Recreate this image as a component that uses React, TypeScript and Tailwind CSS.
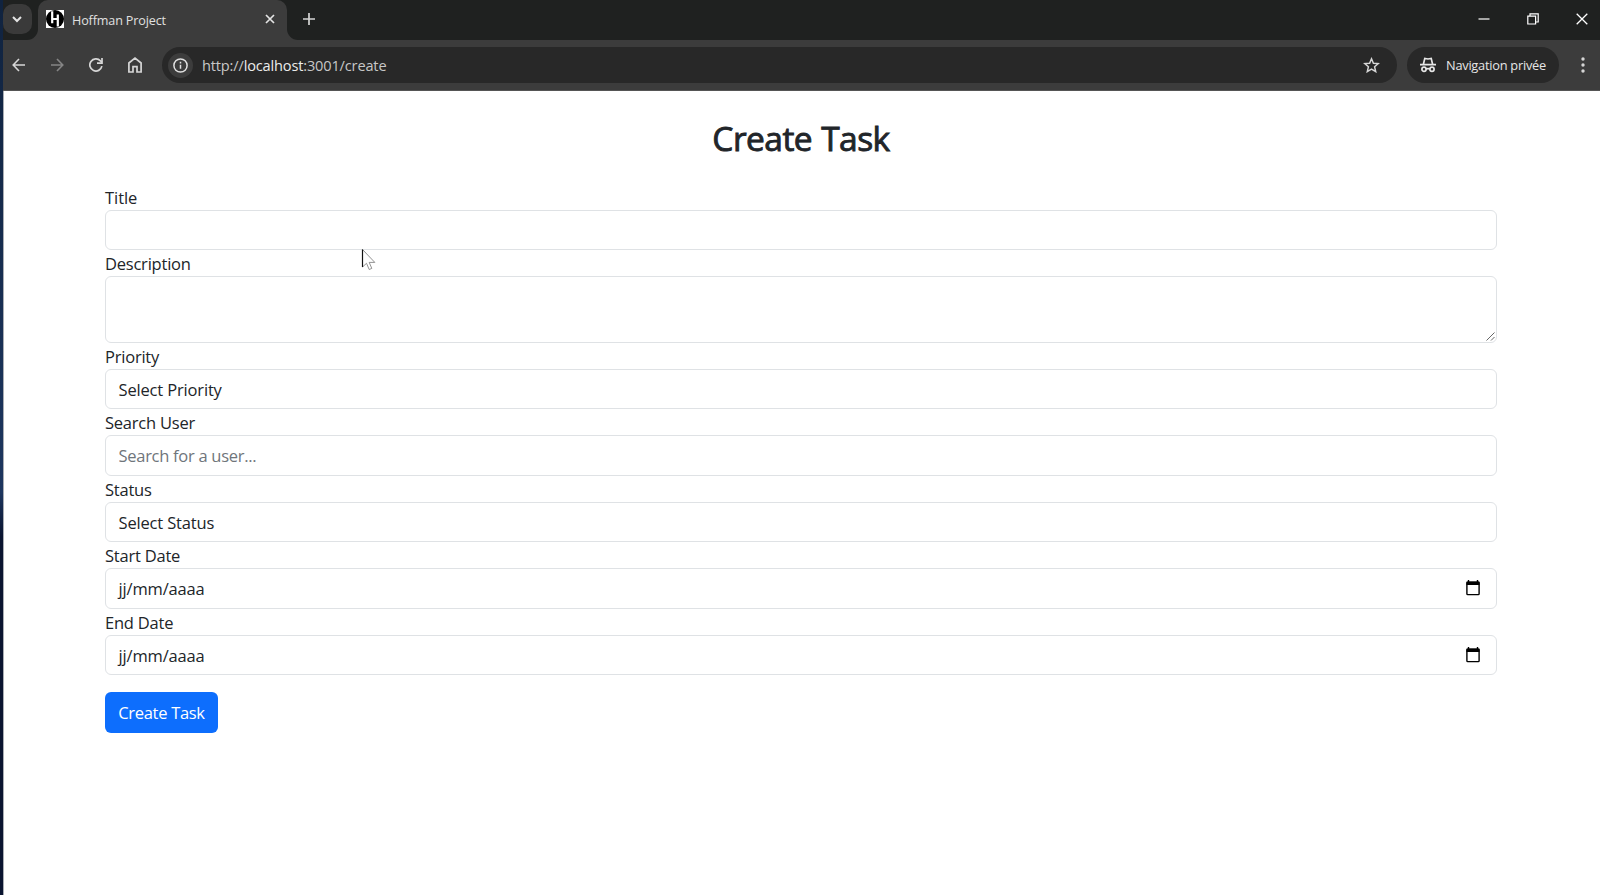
import type { ReactNode } from "react";

const FIELD =
  "block w-full rounded-[6px] border border-[#dfe2e5] bg-white px-[12.5px] text-[16.5px] text-[#212529] outline-none";

function Field({ label, children }: { label: ReactNode; children: ReactNode }) {
  return (
    <div>
      <label className="block h-[26px] text-[16.5px] leading-[27px] tracking-[-0.22px] text-[#212529]">{label}</label>
      {children}
    </div>
  );
}

function SelectBox({ children }: { children: ReactNode }) {
  return <div className={`${FIELD} flex h-[40.5px] items-center pt-[3px] tracking-[-0.16px]`}>{children}</div>;
}

function DateBox() {
  return (
    <div className={`${FIELD} flex h-[40.5px] items-center justify-between`}>
      <span className="pt-[3px] tracking-[-0.16px]">jj/mm/aaaa</span>
      <svg width="14" height="16" viewBox="0 0 14 16" className="mr-[4px]" fill="none">
        <path d="M2.5 0v3M11.5 0v3" stroke="#000" strokeWidth="1.4" />
        <rect x="0.9" y="2.2" width="12.2" height="12.4" rx="0.8" stroke="#000" strokeWidth="1.4" />
        <path d="M0.5 1.6h13v3.4H.5z" fill="#000" />
      </svg>
    </div>
  );
}

function TabStrip() {
  return (
    <div className="flex h-[40px] bg-[#1f2120]">
      <div className="flex h-[40px] w-[35px] bg-[#1f2120]">
        <div className="mt-[4px] flex h-[30px] w-[29px] items-center justify-center rounded-[10px] bg-[#3a3a3a] pr-[2px]">
          <svg width="10" height="7" viewBox="0 0 10 7" fill="none" stroke="#e3e3e3" strokeWidth="2">
            <path d="M1 1l4 4 4-4" />
          </svg>
        </div>
      </div>
      <div className="relative flex h-[40px] w-[249px] items-center rounded-t-[10px] bg-[#3c3c3c] pr-[12px] pl-[8px]">
        <svg className="absolute bottom-0 -left-[11px]" width="11" height="11" viewBox="0 0 11 11">
          <path d="M11 0v11H0A11 11 0 0 0 11 0z" fill="#3c3c3c" />
        </svg>
        <svg className="absolute -right-[11px] bottom-0" width="11" height="11" viewBox="0 0 11 11">
          <path d="M0 0v11h11A11 11 0 0 1 0 0z" fill="#3c3c3c" />
        </svg>
        <svg width="18" height="18" viewBox="0 0 18 18" className="mt-[-2px]">
          <rect width="18" height="18" fill="#fff" />
          <circle cx="9" cy="9" r="9" fill="#000" />
          <path d="M6.2 1.2v12M11.8 4.4v12.2M6.2 9h5.6" stroke="#fff" strokeWidth="2.2" fill="none" />
        </svg>
        <span className="ml-[8px] text-[12.6px] leading-[39px] tracking-[-0.14px] text-[#e0e0e0]">Hoffman Project</span>
        <svg width="10" height="10" viewBox="0 0 10 10" className="mt-[-2px] ml-auto" stroke="#e3e3e3" strokeWidth="1.7">
          <path d="M1 1l8 8M9 1L1 9" />
        </svg>
      </div>
      <div className="flex flex-1 items-center pl-[16px]">
        <svg width="12" height="12" viewBox="0 0 12 12" className="mt-[-2px]" stroke="#d5d5d5" strokeWidth="1.7">
          <path d="M6 0v12M0 6h12" />
        </svg>
      </div>
      <div className="flex items-center gap-[37px] pr-[12px] pb-[2px]">
        <svg width="12" height="12" viewBox="0 0 12 12" stroke="#fff" strokeWidth="1.2">
          <path d="M0.5 6h11" />
        </svg>
        <svg width="12" height="12" viewBox="0 0 12 12" fill="none" stroke="#fff" strokeWidth="1.2">
          <path d="M0.8 3.2h7.8v7.8H.8zM3 3V.9h8.2V9H8.8" />
        </svg>
        <svg width="12" height="12" viewBox="0 0 12 12" stroke="#fff" strokeWidth="1.3">
          <path d="M.7 .7l10.6 10.6M11.3 .7L.7 11.3" />
        </svg>
      </div>
    </div>
  );
}

function Toolbar() {
  return (
    <div className="flex h-[51px] items-center border-b border-[#555] bg-[#3c3c3c] pl-[9px]">
      <svg width="14" height="14" viewBox="0 0 14 14" fill="none" stroke="#d6d6d6" strokeWidth="1.6">
        <path d="M13 7H1.5M7 1L1.2 7 7 13" />
      </svg>
      <svg width="14" height="14" viewBox="0 0 14 14" className="ml-[24px]" fill="none" stroke="#858585" strokeWidth="1.6">
        <path d="M1 7h11.5M7 1l5.8 6L7 13" />
      </svg>
      <svg width="14" height="14" viewBox="0 0 14 14" className="ml-[25px]" fill="none" stroke="#d6d6d6" strokeWidth="1.7">
        <path d="M12.9 8.2A6.1 6.1 0 1 1 11.4 2.8L12.8 4.4" />
        <path d="M13 0v5.2H8" />
      </svg>
      <svg width="14" height="16" viewBox="0 0 14 16" className="ml-[25px]" fill="none" stroke="#d6d6d6" strokeWidth="1.7">
        <path d="M.9 15V6L7 1.2 13.1 6v9H9V9.6H5V15z" />
      </svg>
      <div className="ml-[20px] flex h-[36px] w-[1235px] items-center rounded-full bg-[#282828] pr-[17px] pl-[6px]">
        <div className="flex h-[25px] w-[25px] items-center justify-center rounded-full bg-[#3c3c3c]">
          <svg width="15" height="15" viewBox="0 0 15 15" fill="none" stroke="#e0e0e0" strokeWidth="1.5">
            <circle cx="7.5" cy="7.5" r="6.6" />
            <path d="M7.5 6.7v4M7.5 3.8v1.7" />
          </svg>
        </div>
        <span className="ml-[9px] pt-[2px] text-[14.6px] tracking-[-0.17px] text-[#c7c7c7]">
          http://<span className="text-[#ececec]">localhost</span>:3001/create
        </span>
        <svg width="17" height="16" viewBox="0 0 17 16" className="ml-auto" fill="none" stroke="#d6d6d6" strokeWidth="1.5">
          <path d="M8.5 1.8l1.9 4.4 4.9.4-3.7 3.2 1.1 4.8-4.2-2.5-4.2 2.5 1.1-4.8L1.7 6.6l4.9-.4z" />
        </svg>
      </div>
      <div className="ml-[10px] flex h-[36px] w-[152px] items-center rounded-full bg-[#282828] pl-[13px]">
        <svg width="16" height="16" viewBox="0 0 16 16" fill="none" stroke="#e6e6e6" strokeWidth="1.7">
          <path d="M0 7.6h16M3.4 7.2L4.8 1.4 8 2l3.2-.6 1.4 5.8M6 12q2-.9 4 0" />
          <circle cx="4" cy="12.2" r="2.1" />
          <circle cx="12" cy="12.2" r="2.1" />
        </svg>
        <span className="ml-[10px] pt-px text-[12.8px] tracking-[-0.25px] whitespace-nowrap text-[#e6e6e6]">
          Navigation privée
        </span>
      </div>
      <svg width="4" height="16" viewBox="0 0 4 16" className="ml-[22px]" fill="#d6d6d6">
        <circle cx="2" cy="2" r="1.7" />
        <circle cx="2" cy="8" r="1.7" />
        <circle cx="2" cy="14" r="1.7" />
      </svg>
    </div>
  );
}

export default function App() {
  return (
    <div className="relative flex h-[895px] w-[1600px] overflow-hidden bg-white font-['Open_Sans','Noto_Sans',sans-serif]">
      <div className="w-[3px] shrink-0 bg-linear-to-b from-[#10233f] via-[#1d365f] via-55% to-[#0a1430] to-60%" />
      <div className="flex min-w-0 flex-1 flex-col">
        <TabStrip />
        <Toolbar />
        <main className="flex-1 border-l border-[#a9adb3] bg-white pr-[103px] pl-[101px]">
          <h1 className="pt-[23px] pb-px text-center text-[33.5px] leading-[48px] font-normal tracking-[-0.55px] text-[#212529] [-webkit-text-stroke:0.9px_#212529] [word-spacing:1px]">
            Create Task
          </h1>
          <form className="mt-[20.5px]">
            <Field label={<span className="tracking-[-0.05px]">Title</span>}>
              <input className={`${FIELD} h-[40.5px]`} />
            </Field>
            <Field label="Description">
              <div className="relative">
                <textarea className={`${FIELD} h-[66.5px] resize-none`} />
                <svg className="absolute right-[2px] bottom-[2px]" width="9" height="9" viewBox="0 0 9 9" stroke="#666" strokeWidth="1">
                  <path d="M.5 8.5l8-8M5 8.5L8.5 5" />
                </svg>
              </div>
            </Field>
            <Field label="Priority">
              <SelectBox>Select Priority</SelectBox>
            </Field>
            <Field label="Search User">
              <input
                className={`${FIELD} h-[40.5px] tracking-[-0.28px] placeholder:text-[#6f757b]`}
                placeholder="Search for a user..."
              />
            </Field>
            <Field label="Status">
              <SelectBox>Select Status</SelectBox>
            </Field>
            <Field label="Start Date">
              <DateBox />
            </Field>
            <Field label="End Date">
              <DateBox />
            </Field>
            <button
              type="button"
              className="mt-[17px] flex h-[41px] w-[113px] items-center justify-center rounded-[6px] bg-[#0d6efd] pt-[2px] text-[16.5px] tracking-[-0.3px] whitespace-nowrap text-white"
            >
              Create Task
            </button>
          </form>
        </main>
      </div>
      <svg className="absolute top-[248px] left-[361px]" width="17" height="24" viewBox="0 0 17 24">
        <path d="M1.5 1.5v17.5l4-3.7 2.7 6.2 2.6-1.1-2.6-6h5.6z" fill="#fff" stroke="#777" strokeWidth="0.8" />
        <path d="M1.5 1.5v17.5" stroke="#111" strokeWidth="1.2" />
      </svg>
    </div>
  );
}
